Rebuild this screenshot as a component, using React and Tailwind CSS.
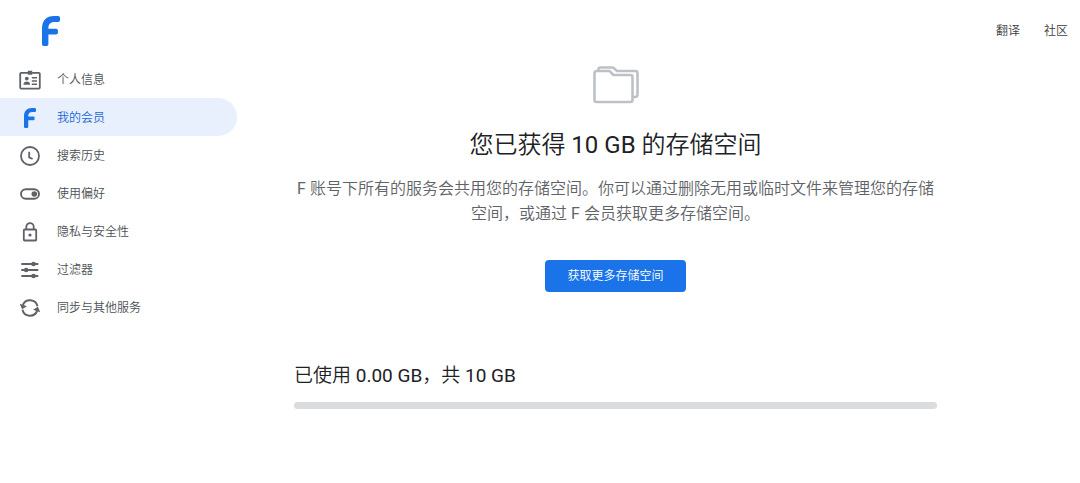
function FLogo({ className }) {
  return (
    <svg viewBox="0 0 18 30" className={className} fill="currentColor" aria-hidden="true">
      <path d="M0 12.5C0 4.5 4.5 0 12 0h4.2A1.8 1.8 0 0 1 18 1.8v2.4A1.8 1.8 0 0 1 16.2 6H12.5C8.5 6 6.4 8.2 6.4 12v.8h7.8a1.7 1.7 0 0 1 1.7 1.7v2.2a1.7 1.7 0 0 1-1.7 1.7H6.4v9.8A1.8 1.8 0 0 1 4.6 30H1.8A1.8 1.8 0 0 1 0 28.2Z" />
    </svg>
  );
}

function Icon({ children }) {
  return (
    <svg
      viewBox="0 0 24 24"
      className="size-6"
      fill="none"
      stroke="currentColor"
      strokeWidth="2"
      aria-hidden="true"
    >
      {children}
    </svg>
  );
}

const items = [
  {
    label: "个人信息",
    icon: (
      <Icon>
        <rect x="2.2" y="4.8" width="19.6" height="15.8" rx="1" strokeWidth="1.8" />
        <path d="M9.8 2.800h4.400v4h-4.400z" fill="currentColor" stroke="none" />
        <circle cx="8.8" cy="10.6" r="1.9" fill="currentColor" stroke="none" />
        <path d="M5.400 16.800c0-2.400 1.800-3.200 3.400-3.200s3.400.8 3.400 3.200z" fill="currentColor" stroke="none" />
        <path d="M13.800 9.800H19M13.800 13H19M13.800 16.200H19" strokeWidth="1.5" />
      </Icon>
    ),
  },
  { label: "我的会员", icon: <FLogo className="h-5 w-3" />, active: true },
  {
    label: "搜索历史",
    icon: (
      <Icon>
        <circle cx="12" cy="12" r="9" strokeWidth="1.8" />
        <path d="M11.200 7.800v5.600l3.400 1.600" strokeWidth="1.8" />
      </Icon>
    ),
  },
  {
    label: "使用偏好",
    icon: (
      <Icon>
        <rect x="3" y="7.2" width="18" height="9.6" rx="4.8" strokeWidth="1.9" />
        <circle cx="16.300" cy="12" r="2.800" fill="currentColor" stroke="none" />
      </Icon>
    ),
  },
  {
    label: "隐私与安全性",
    icon: (
      <Icon>
        <rect x="5.800" y="9.500" width="12.400" height="11" rx="0.8" strokeWidth="1.8" />
        <path d="M8.300 9.500V6.800a3.700 3.700 0 0 1 7.400 0V9.500" strokeWidth="1.8" />
        <circle cx="12" cy="15" r="1.6" fill="currentColor" stroke="none" />
      </Icon>
    ),
  },
  {
    label: "过滤器",
    icon: (
      <Icon>
        <path d="M3.300 6h17M3.300 12h17M3.300 18h17" strokeWidth="1.9" />
        <g fill="currentColor" stroke="none">
          <circle cx="15.500" cy="6" r="2.300" />
          <circle cx="8.200" cy="12" r="2.300" />
          <circle cx="15.500" cy="18" r="2.300" />
        </g>
      </Icon>
    ),
  },
  {
    label: "同步与其他服务",
    icon: (
      <Icon>
        <path d="M4.900 9A7.700 7.700 0 0 1 19.500 10.300M19.100 15A7.700 7.700 0 0 1 4.500 13.700" />
        <path
          d="M1.800 7.800L9 10.200L4 13.200zM22.200 16.200L15 13.800L20 10.800z"
          fill="currentColor"
          stroke="none"
        />
      </Icon>
    ),
  },
];

export default function App() {
  return (
    <div className="min-h-screen bg-white font-['Roboto','Noto_Sans_CJK_SC_DemiLight','Noto_Sans_CJK_SC',sans-serif] text-[#202124]">
      <header className="flex h-[60px] items-center justify-between pt-px pr-3 pl-[42px]">
        <a href="#home" aria-label="F" className="text-[#1a73e8]">
          <FLogo className="h-[30px] w-[18px]" />
        </a>
        <nav className="flex gap-6 pt-px text-xs font-[350] text-[#3c4043]">
          <a href="#translate">翻译</a>
          <a href="#community">社区</a>
        </nav>
      </header>
      <div className="flex">
        <nav className="w-[237px] shrink-0">
          <ul>
            {items.map((item) => (
              <li key={item.label}>
                <a
                  href="#section"
                  aria-current={item.active ? "page" : undefined}
                  className={
                    item.active
                      ? "flex h-[38px] items-center gap-[15px] rounded-r-full bg-[#e8f0fe] pt-px pl-[18px] text-xs font-[350] text-[#1967d2]"
                      : "flex h-[38px] items-center gap-[15px] rounded-r-full pt-px pl-[18px] text-xs font-[350] text-[#4c5054]"
                  }
                >
                  <span
                    className={
                      item.active
                        ? "flex w-6 justify-center text-[#1a73e8]"
                        : "flex w-6 justify-center text-[#5f6368]"
                    }
                  >
                    {item.icon}
                  </span>
                  {item.label}
                </a>
              </li>
            ))}
          </ul>
        </nav>
        <main className="flex-1 pr-[143px] pl-[57px]">
          <section className="flex flex-col items-center pt-[5px] text-center">
            <svg
              viewBox="0 0 48 40"
              className="h-10 w-12"
              fill="none"
              stroke="#bdc1c6"
              strokeWidth="2.6"
              strokeLinejoin="round"
              aria-hidden="true"
            >
              <path d="M2.500 8a2 2 0 0 1 2-2h13l4 4H38.500a2 2 0 0 1 2 2V35a2 2 0 0 1-2 2H4.500a2 2 0 0 1-2-2z" />
              <path d="M6.500 6V4.500a2 2 0 0 1 2-2H21l4 3.500H43.500a2 2 0 0 1 2 2V29.500a2.500 2.500 0 0 1-2.500 2.500H41" />
            </svg>
            <h1 className="mt-6 text-2xl font-normal">您已获得 10 GB 的存储空间</h1>
            <p className="mt-[15px] text-base leading-[25px] font-normal text-[#5f6368]">
              F 账号下所有的服务会共用您的存储空间。你可以通过删除无用或临时文件来管理您的存储空间，或通过 F 会员获取更多存储空间。
            </p>
            <button
              type="button"
              className="mt-[34px] h-8 rounded-sm bg-[#1a73e8] px-[22px] text-xs font-[350] text-white"
            >
              获取更多存储空间
            </button>
          </section>
          <section className="mt-[70px]">
            <h2 id="usage" className="text-[19px] leading-7 font-normal">
              已使用 0.00 GB，共 10 GB
            </h2>
            <div
              role="progressbar"
              aria-labelledby="usage"
              aria-valuenow={0}
              aria-valuemin={0}
              aria-valuemax={10}
              className="mt-3 h-[7px] rounded-full bg-[#dadce0]"
            />
          </section>
        </main>
      </div>
    </div>
  );
}
